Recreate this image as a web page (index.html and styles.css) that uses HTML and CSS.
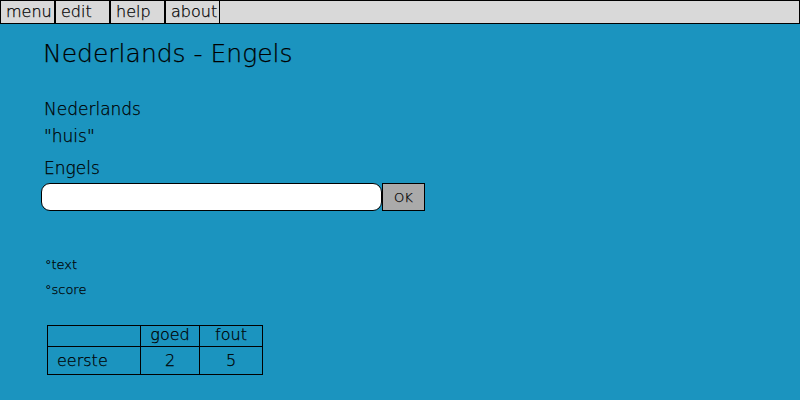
FILE: index.html
```html
<!DOCTYPE html>
<html lang="nl">
<head>
<meta charset="utf-8">
<title>Nederlands - Engels</title>
<link rel="stylesheet" href="styles.css">
</head>
<body>
<nav class="menubar">
  <div class="menu-item">menu</div>
  <div class="menu-item">edit</div>
  <div class="menu-item">help</div>
  <div class="menu-item">about</div>
</nav>
<main class="content">
  <h1 class="title">Nederlands - Engels</h1>
  <div class="label label-first">Nederlands</div>
  <div class="label">"huis"</div>
  <div class="label label-last">Engels</div>
  <div class="answer-row">
    <input class="answer" type="text">
    <button class="ok">OK</button>
  </div>
  <div class="note note-first">°text</div>
  <div class="note">°score</div>
  <table class="scores">
    <tr>
      <th class="c1"></th>
      <th class="c2">goed</th>
      <th class="c3">fout</th>
    </tr>
    <tr>
      <td class="c1 name">eerste</td>
      <td class="c2">2</td>
      <td class="c3">5</td>
    </tr>
  </table>
</main>
</body>
</html>
```
FILE: styles.css
```css
html, body {
  margin: 0;
  padding: 0;
  height: 100%;
}
body {
  background: #1b94bf;
  font-family: "DejaVu Sans", "Liberation Sans", sans-serif;
  font-weight: 200;
  color: #000;
  -webkit-text-stroke: 0.25px #000;
}
.menubar {
  display: flex;
  height: 22px;
  background: #d9d9d9;
  border-top: 1px solid #000;
  border-bottom: 1px solid #000;
  border-right: 1px solid #000;
}
.menu-item {
  box-sizing: border-box;
  width: 55px;
  border-left: 1px solid #000;
  border-right: 1px solid #000;
  padding-left: 5px;
  font-size: 16px;
  line-height: 22px;
  white-space: nowrap;
}
.content {
  padding-left: 43px;
}
.title {
  margin: 15px 0 0 0;
  font-size: 25px;
  font-weight: 200;
  line-height: 30px;
}
.label {
  font-size: 17px;
  line-height: 20px;
  margin-top: 7px;
  margin-left: 1px;
}
.label-first {
  margin-top: 30px;
}
.label-last {
  margin-top: 12px;
}
.answer-row {
  display: flex;
  margin-top: 5px;
  margin-left: -2px;
}
.answer {
  box-sizing: border-box;
  width: 341px;
  height: 28px;
  margin: 0;
  background: #fff;
  border: 1px solid #000;
  border-radius: 9px;
  font-family: inherit;
  font-size: 15px;
  padding: 0 8px;
}
.ok {
  box-sizing: border-box;
  width: 43px;
  height: 28px;
  margin: 0;
  padding: 0;
  background: #aaaaaa;
  border: 1px solid #000;
  border-radius: 0;
  font-family: inherit;
  font-weight: 200;
  font-size: 13px;
  color: #000;
}
.note {
  font-size: 13px;
  line-height: 16px;
  margin-top: 9px;
  margin-left: 2px;
}
.note-first {
  margin-top: 46px;
}
.scores {
  border-collapse: collapse;
  margin-top: 27px;
  margin-left: 4px;
  font-size: 16px;
}
.scores th,
.scores td {
  border: 1px solid #000;
  padding: 0;
  font-weight: 200;
  text-align: center;
}
.scores th {
  height: 20px;
  line-height: 18px;
  vertical-align: top;
}
.scores td {
  height: 27px;
  line-height: 20px;
}
.scores .c1 { width: 92px; }
.scores .c2 { width: 58px; }
.scores .c3 { width: 62px; }
.scores .name {
  text-align: left;
  padding-left: 9px;
  width: 83px;
}
```
